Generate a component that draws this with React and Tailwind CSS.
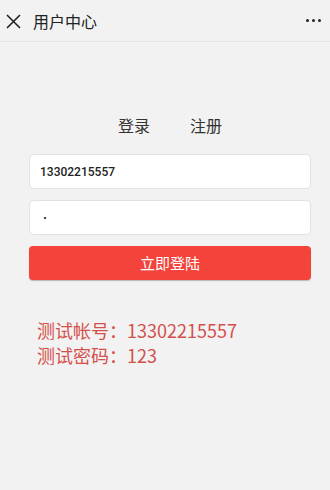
import React, { useState } from 'react';

const font = { fontFamily: '"Noto Sans CJK SC", "Liberation Sans", sans-serif' };

export default function App() {
  const [phone, setPhone] = useState('13302215557');
  const [pwd, setPwd] = useState('1');

  return (
    <div className="w-[330px] h-[490px] bg-[#f2f2f2] overflow-hidden" style={font}>
      {/* header */}
      <div className="h-[42px] flex items-center px-[6px] border-b border-[#e6e6e6]">
        <svg width="15" height="15" viewBox="0 0 15 15" className="mt-[1px]">
          <path d="M1 1 L14 14 M14 1 L1 14" stroke="#222" strokeWidth="1.6" />
        </svg>
        <span className="ml-[12px] text-[16px] text-[#222]">用户中心</span>
        <div className="ml-auto flex gap-[3px] mr-[3px]">
          <span className="w-[3px] h-[3px] bg-[#222] rounded-full" />
          <span className="w-[3px] h-[3px] bg-[#222] rounded-full" />
          <span className="w-[3px] h-[3px] bg-[#222] rounded-full" />
        </div>
      </div>

      <div className="pl-[29px] pr-[19px]">
        {/* tabs */}
        <div className="flex justify-center gap-[40px] mt-[75px] text-[16px] text-[#333] leading-none">
          <span>登录</span>
          <span>注册</span>
        </div>

        {/* form */}
        <div className="mt-[21px] flex flex-col gap-[11px]">
          <input
            type="text"
            value={phone}
            onChange={(e) => setPhone(e.target.value)}
            className="h-[35px] bg-white rounded-[5px] border border-[#e2e2e2] px-[10px] text-[12px] font-medium text-[#222] outline-none"
            style={{ fontFamily: '"Roboto", "Liberation Sans", sans-serif' }}
          />
          <input
            type="password"
            value={pwd}
            onChange={(e) => setPwd(e.target.value)}
            className="h-[35px] bg-white rounded-[5px] border border-[#e2e2e2] px-[10px] text-[10px] text-[#222] outline-none"
          />
          <button className="h-[34px] bg-[#f4433b] rounded-[4px] text-white text-[15px] shadow-[0_1px_1px_rgba(0,0,0,0.25)]">
            立即登陆
          </button>
        </div>

        {/* test account */}
        <div className="mt-[38px] pl-[8px] text-[18px] leading-[25px] text-[#d4504c]">
          <div>测试帐号：13302215557</div>
          <div>测试密码：123</div>
        </div>
      </div>
    </div>
  );
}
